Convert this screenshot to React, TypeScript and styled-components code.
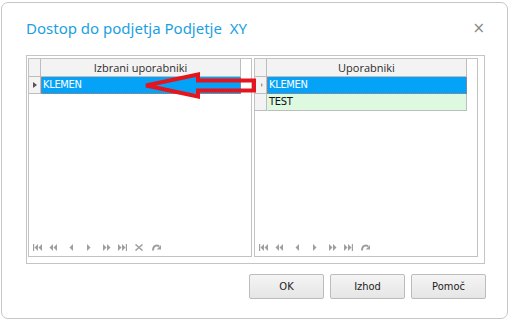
import styled, { createGlobalStyle } from "styled-components";

const GlobalStyle = createGlobalStyle`
  html, body {
    margin: 0;
    padding: 0;
    background: #ffffff;
  }
`;

const ICON = "#9f9f9f";

type NavKind = "first" | "prevPage" | "prev" | "next" | "nextPage" | "last" | "remove" | "refresh";

const NavGlyph = ({ kind }: { kind: NavKind }) => {
  switch (kind) {
    case "first":
      return (
        <svg width="9" height="7" viewBox="0 0 9 7">
          <rect x="0" y="0" width="1.2" height="7" fill={ICON} />
          <polygon points="5,0 1.5,3.5 5,7" fill={ICON} />
          <polygon points="9,0 5.5,3.5 9,7" fill={ICON} />
        </svg>
      );
    case "prevPage":
      return (
        <svg width="8" height="7" viewBox="0 0 8 7">
          <polygon points="4,0 0.5,3.5 4,7" fill={ICON} />
          <polygon points="8,0 4.5,3.5 8,7" fill={ICON} />
        </svg>
      );
    case "prev":
      return (
        <svg width="4" height="7" viewBox="0 0 4 7">
          <polygon points="4,0 0.5,3.5 4,7" fill={ICON} />
        </svg>
      );
    case "next":
      return (
        <svg width="4" height="7" viewBox="0 0 4 7">
          <polygon points="0,0 3.5,3.5 0,7" fill={ICON} />
        </svg>
      );
    case "nextPage":
      return (
        <svg width="8" height="7" viewBox="0 0 8 7">
          <polygon points="0,0 3.5,3.5 0,7" fill={ICON} />
          <polygon points="4,0 7.5,3.5 4,7" fill={ICON} />
        </svg>
      );
    case "last":
      return (
        <svg width="9" height="7" viewBox="0 0 9 7">
          <polygon points="0,0 3.5,3.5 0,7" fill={ICON} />
          <polygon points="4,0 7.5,3.5 4,7" fill={ICON} />
          <rect x="7.8" y="0" width="1.2" height="7" fill={ICON} />
        </svg>
      );
    case "remove":
      return (
        <svg width="8" height="7" viewBox="0 0 8 7">
          <path d="M0.5 0.5 L7.5 6.5 M7.5 0.5 L0.5 6.5" stroke={ICON} strokeWidth="1.5" />
        </svg>
      );
    case "refresh":
      return (
        <svg width="9" height="7" viewBox="0 0 9 7">
          <path d="M1 6.5 C1 3 3 1.5 5 1.5 C6 1.5 6.5 2 7 2.5" stroke={ICON} strokeWidth="2" fill="none" />
          <polygon points="9,1 9,5.5 4.8,5.5" fill={ICON} />
        </svg>
      );
  }
};

const NAV_LEFT: { kind: NavKind; w: number }[] = [
  { kind: "first", w: 16 },
  { kind: "prevPage", w: 20 },
  { kind: "prev", w: 18 },
  { kind: "next", w: 16 },
  { kind: "nextPage", w: 15 },
  { kind: "last", w: 17 },
  { kind: "remove", w: 17 },
  { kind: "refresh", w: 12 },
];

const NAV_RIGHT = NAV_LEFT.filter((n) => n.kind !== "remove");

type Row = { name: string; selected?: boolean; current?: boolean };

const UserGrid = ({
  title,
  rows,
  nav,
  faintCaret,
}: {
  title: string;
  rows: Row[];
  nav: { kind: NavKind; w: number }[];
  faintCaret?: boolean;
}) => (
  <Panel>
    <Grid>
      <HeaderRow>
        <Indicator />
        <HeaderCell>{title}</HeaderCell>
      </HeaderRow>
      {rows.map((r) => (
        <DataRow key={r.name}>
          <Indicator>{r.current && <Caret $faint={faintCaret} />}</Indicator>
          <Cell $selected={r.selected}>{r.name}</Cell>
        </DataRow>
      ))}
    </Grid>
    <Spacer />
    <Navigator>
      {nav.map((n) => (
        <NavSlot key={n.kind} $w={n.w}>
          <NavGlyph kind={n.kind} />
        </NavSlot>
      ))}
    </Navigator>
  </Panel>
);

export default function App() {
  return (
    <>
      <GlobalStyle />
      <Dialog>
        <TitleBar>
          <Title>Dostop do podjetja Podjetje&nbsp; XY</Title>
          <Close>×</Close>
        </TitleBar>
        <GroupBox>
          <UserGrid
            title="Izbrani uporabniki"
            rows={[{ name: "KLEMEN", selected: true, current: true }]}
            nav={NAV_LEFT}
          />
          <UserGrid
            title="Uporabniki"
            rows={[{ name: "KLEMEN", selected: true, current: true }, { name: "TEST" }]}
            nav={NAV_RIGHT}
            faintCaret
          />
        </GroupBox>
        <Buttons>
          <Button>OK</Button>
          <Button>Izhod</Button>
          <Button>Pomoč</Button>
        </Buttons>
        <Annotation width="120" height="32" viewBox="0 0 120 32">
          <polygon
            points="5,15.5 57,4.5 57,10.5 113,10.5 113,20.5 57,20.5 57,26.5"
            fill="none"
            stroke="#e5151d"
            strokeWidth="4"
            strokeLinejoin="miter"
          />
        </Annotation>
      </Dialog>
    </>
  );
}

const Dialog = styled.div`
  position: relative;
  box-sizing: border-box;
  width: 507px;
  height: 317px;
  margin: 2px 0 0 1px;
  padding: 0 21px 0 24px;
  border: 1px solid #c6c6c6;
  border-radius: 7px;
  background: #ffffff;
  display: flex;
  flex-direction: column;
`;

const TitleBar = styled.div`
  height: 52px;
  display: flex;
  align-items: center;
  justify-content: space-between;
  box-sizing: border-box;
  padding-bottom: 3px;
`;

const Title = styled.div`
  font-family: "Noto Sans", "Open Sans", sans-serif;
  font-size: 15px;
  color: #1b9fe2;
`;

const Close = styled.div`
  font-family: "DejaVu Sans", sans-serif;
  font-size: 15px;
  color: #8a8a8a;
  margin-right: 1px;
`;

const GroupBox = styled.div`
  box-sizing: border-box;
  width: 459px;
  height: 209px;
  border: 1px solid #c4c4c4;
  padding: 2px 5px 6px 1px;
  display: flex;
  gap: 2px;
`;

const Panel = styled.div`
  box-sizing: border-box;
  width: 224px;
  border: 1px solid #c2c2c2;
  display: flex;
  flex-direction: column;
  padding-right: 10px;
`;

const Grid = styled.div`
  display: flex;
  flex-direction: column;
  font-family: "DejaVu Sans Condensed", "DejaVu Sans", sans-serif;
  font-size: 11px;
`;

const HeaderRow = styled.div`
  display: flex;
  height: 18px;
`;

const DataRow = styled.div`
  display: flex;
  height: 17px;
`;

const Indicator = styled.div`
  box-sizing: border-box;
  width: 12px;
  flex-shrink: 0;
  background: #f3f3f3;
  border-right: 1px solid #bdbdbd;
  border-bottom: 1px solid #bdbdbd;
  display: flex;
  align-items: center;
  justify-content: center;
`;

const Caret = styled.span<{ $faint?: boolean }>`
  width: 0;
  height: 0;
  border-top: ${({ $faint }) => ($faint ? 2 : 3.5)}px solid transparent;
  border-bottom: ${({ $faint }) => ($faint ? 2 : 3.5)}px solid transparent;
  border-left: ${({ $faint }) => ($faint ? "2px solid #9a9a9a" : "4px solid #555")};
  margin-left: ${({ $faint }) => ($faint ? 3 : 1)}px;
`;

const HeaderCell = styled.div`
  box-sizing: border-box;
  flex: 1;
  background: #f3f3f3;
  border-right: 1px solid #bdbdbd;
  border-bottom: 1px solid #bdbdbd;
  color: #2b2b2b;
  text-align: center;
  line-height: 17px;
  font-family: "Open Sans", "Noto Sans", sans-serif;
  font-size: 11px;
`;

const Cell = styled.div<{ $selected?: boolean }>`
  box-sizing: border-box;
  flex: 1;
  padding-left: 1px;
  line-height: 16px;
  letter-spacing: -0.3px;
  color: ${({ $selected }) => ($selected ? "#ffffff" : "#111111")};
  background: ${({ $selected }) => ($selected ? "#05a3f8" : "#ddf9e0")};
  border: ${({ $selected }) => ($selected ? "1px dotted #d8745a" : "1px solid transparent")};
  border-top: none;
  ${({ $selected }) =>
    $selected ? "" : "border-right: 1px solid #bdbdbd; border-bottom: 1px solid #bdbdbd;"}
`;

const Spacer = styled.div`
  flex: 1;
`;

const Navigator = styled.div`
  display: flex;
  align-items: center;
  height: 8px;
  padding: 0 0 5px 4px;
`;

const NavSlot = styled.span<{ $w: number }>`
  width: ${({ $w }) => $w}px;
  flex-shrink: 0;
  display: flex;
  align-items: center;
`;

const Buttons = styled.div`
  display: flex;
  justify-content: flex-end;
  gap: 6px;
  margin-top: 10px;
`;

const Button = styled.button`
  box-sizing: border-box;
  width: 75px;
  height: 25px;
  border: 1px solid #bcbcbc;
  border-radius: 2px;
  background: linear-gradient(#f4f4f4, #e6e6e6);
  font-family: "DejaVu Sans Condensed", "DejaVu Sans", sans-serif;
  font-size: 11px;
  color: #222222;
  padding: 0;
`;

const Annotation = styled.svg`
  position: absolute;
  left: 139px;
  top: 67px;
  pointer-events: none;
`;
